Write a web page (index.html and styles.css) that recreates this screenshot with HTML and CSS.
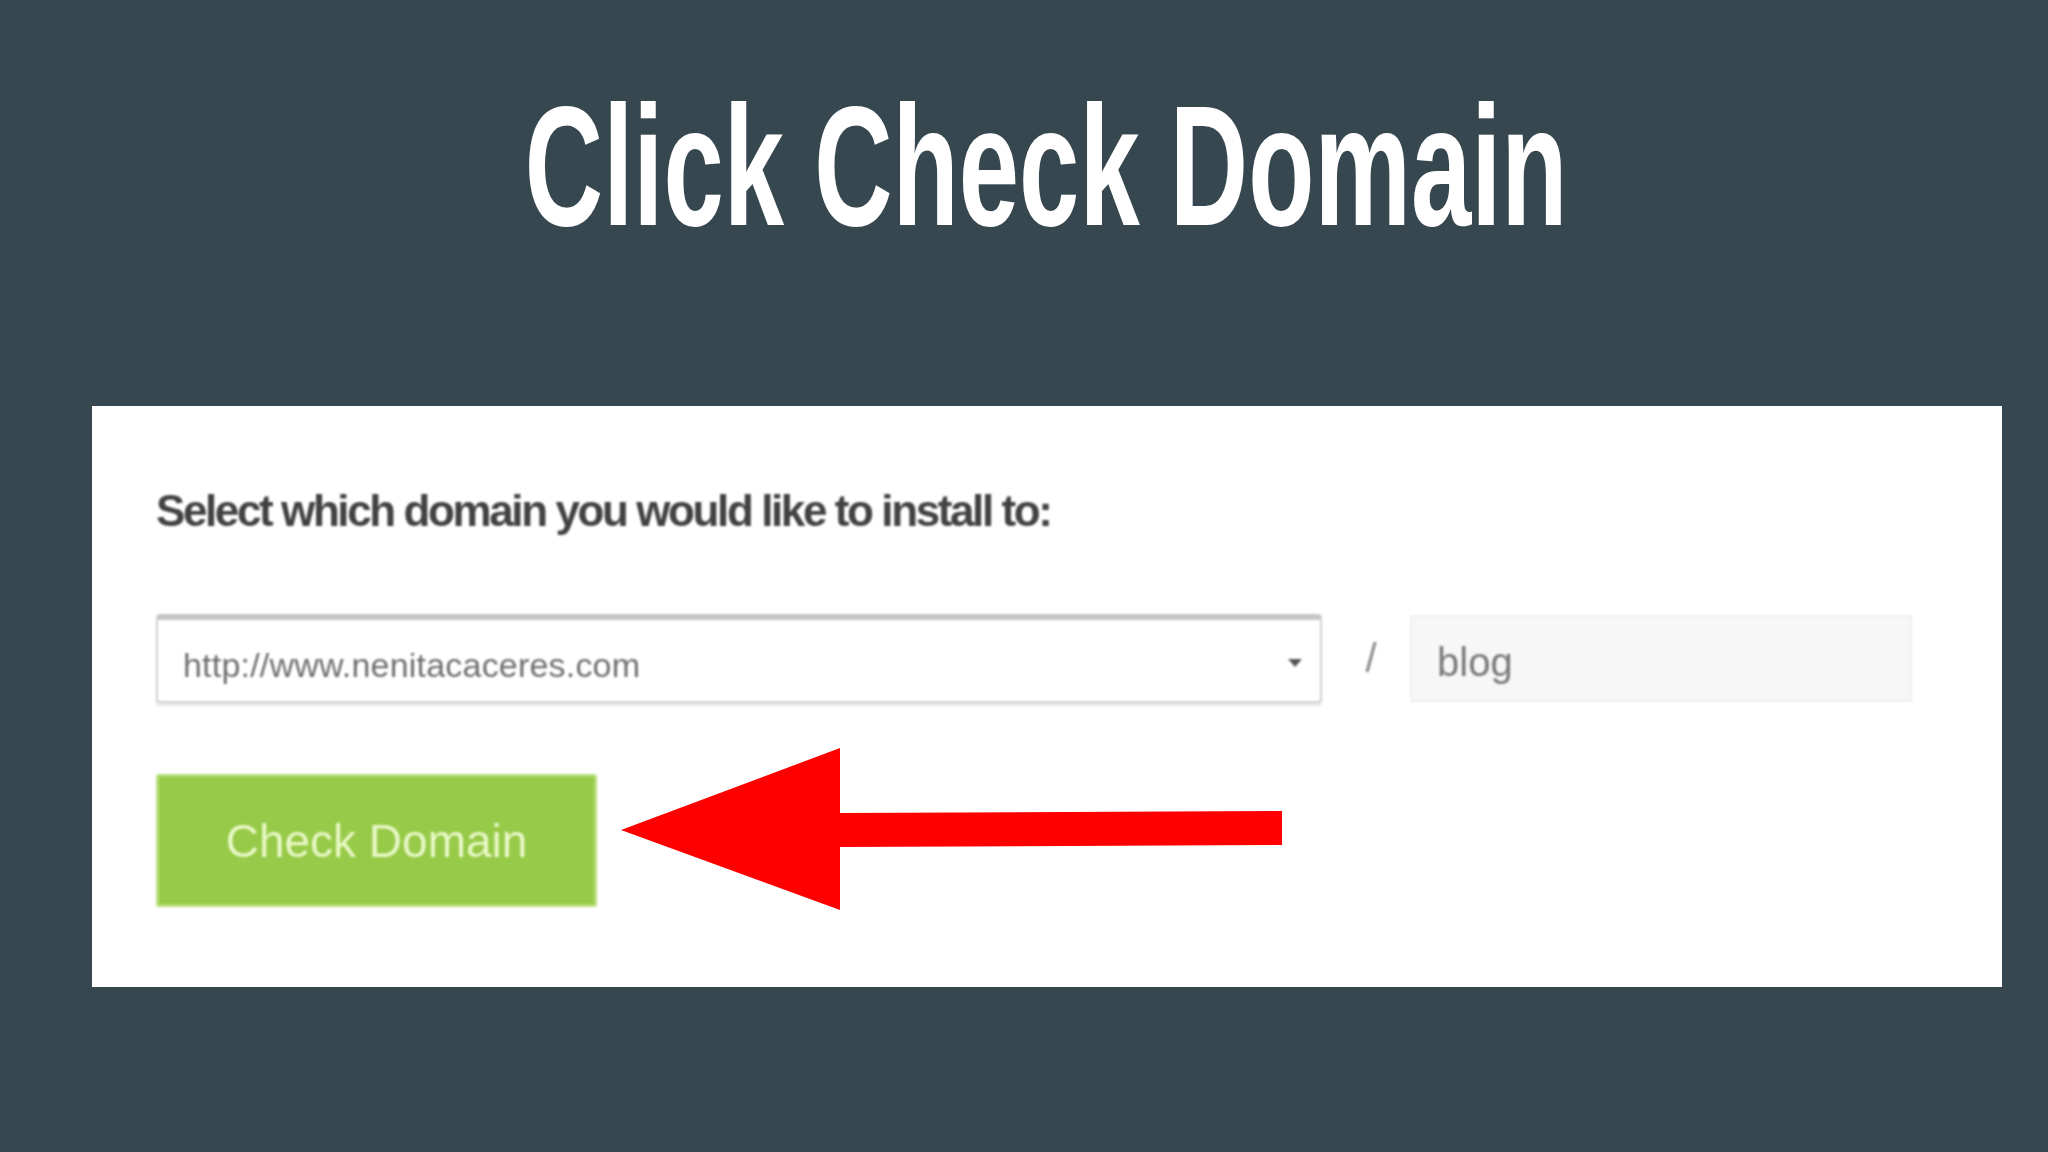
FILE: index.html
```html
<!DOCTYPE html>
<html lang="en">
<head>
    <meta charset="UTF-8">
    <meta name="viewport" content="width=device-width, initial-scale=1.0">
    <title>Click Check Domain</title>
    <link rel="stylesheet" href="styles.css">
</head>
<body>
    <h1 class="slide-title"><span>Click Check Domain</span></h1>

    <div class="install-card">
        <div class="install-form">
            <p class="install-label">Select which domain you would like to install to:</p>

            <div class="domain-row">
                <div class="domain-select">
                    <span class="domain-value">http://www.nenitacaceres.com</span>
                    <span class="select-caret"></span>
                </div>
                <span class="path-slash">/</span>
                <div class="path-input">blog</div>
            </div>

            <button type="button" class="check-btn">Check Domain</button>
        </div>

        <svg class="pointer-arrow" width="662" height="163" viewBox="0 0 662 163">
            <polygon points="0,82 219,0 219,65 661,63 661,97 219,99 219,162" fill="#ff0000"/>
        </svg>
    </div>
</body>
</html>
```

FILE: styles.css
```css
* {
    margin: 0;
    padding: 0;
    box-sizing: border-box;
}

body {
    background: #37474f;
    font-family: 'Liberation Sans', Arial, sans-serif;
    min-height: 100vh;
}

.slide-title {
    padding-top: 81px;
    padding-left: 44px;
    font-size: 170px;
    line-height: 170px;
    font-weight: 700;
    color: #ffffff;
    text-align: center;
    white-space: nowrap;
}

.slide-title span {
    display: inline-block;
    transform: scaleX(0.638);
}

.install-card {
    position: relative;
    margin-top: 155px;
    margin-left: 92px;
    width: 1910px;
    height: 581px;
    background: #ffffff;
}

.install-form {
    padding: 80px 0 0 64px;
    filter: blur(1.2px);
}

.install-label {
    font-size: 44px;
    line-height: 50px;
    font-weight: 700;
    letter-spacing: -2.4px;
    color: #424242;
}

.domain-row {
    display: flex;
    align-items: center;
    margin-top: 78px;
}

.domain-select {
    display: flex;
    align-items: center;
    justify-content: space-between;
    width: 1166px;
    height: 89px;
    padding: 10px 18px 0 25px;
    background: #ffffff;
    border: 2px solid #d2d2d2;
    border-top: 6px solid #c6c6c6;
    border-radius: 4px;
    box-shadow: 0 3px 2px #e6e6e6;
}

.domain-value {
    font-size: 34px;
    color: #6f6f6f;
    letter-spacing: 0.2px;
}

.select-caret {
    width: 0;
    height: 0;
    border-left: 7px solid transparent;
    border-right: 7px solid transparent;
    border-top: 8px solid #555555;
    margin-top: -6px;
}

.path-slash {
    width: 88px;
    padding-left: 10px;
    text-align: center;
    font-size: 40px;
    color: #8a8a8a;
}

.path-input {
    width: 502px;
    height: 87px;
    padding: 8px 0 0 25px;
    display: flex;
    align-items: center;
    background: #f7f7f7;
    border: 2px solid #efefef;
    font-size: 40px;
    color: #7a7a7a;
}

.check-btn {
    display: block;
    margin-top: 71px;
    width: 441px;
    height: 133px;
    background: #97ca48;
    border: 3px solid #b7de7c;
    border-radius: 3px;
    font-family: 'Liberation Sans', Arial, sans-serif;
    font-size: 46px;
    color: #e8f8c6;
    cursor: pointer;
}

.pointer-arrow {
    position: absolute;
    left: 529px;
    top: 342px;
}
```
